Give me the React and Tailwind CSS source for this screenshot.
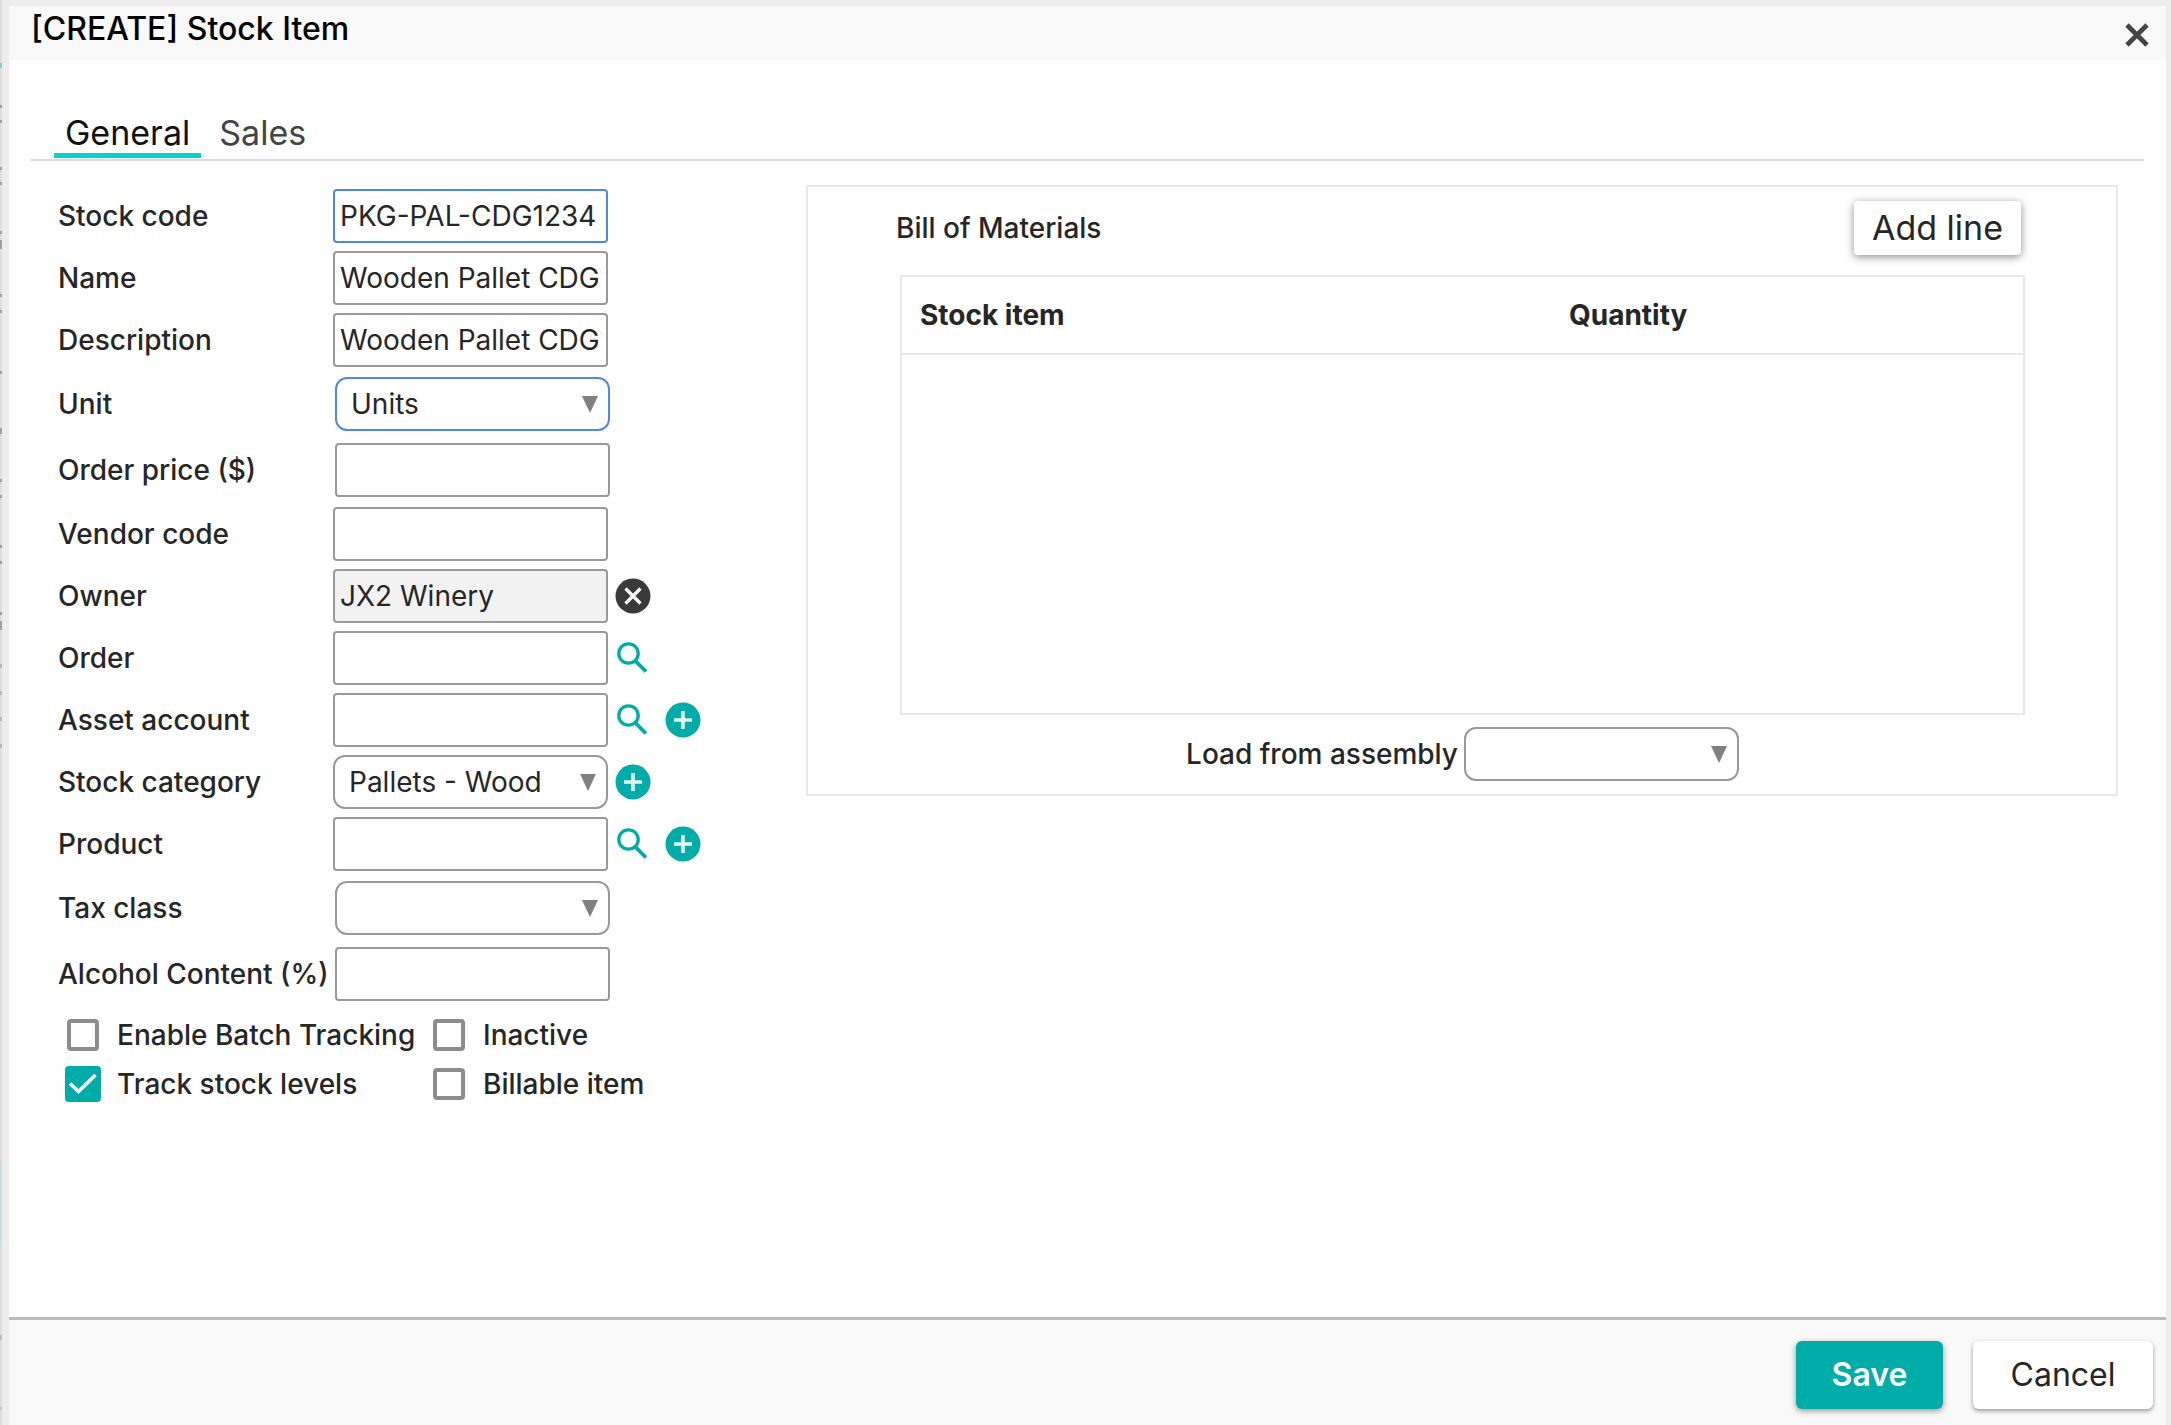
import React from 'react'

const FIELDS = [
  { id: 'stock-code', label: 'Stock code', value: 'PKG-PAL-CDG1234', active: true },
  { id: 'name', label: 'Name', value: 'Wooden Pallet CDG1234' },
  { id: 'description', label: 'Description', value: 'Wooden Pallet CDG1234' },
  { id: 'unit', label: 'Unit', type: 'select', value: 'Units', active: true, inset: true },
  { id: 'order-price', label: 'Order price ($)', value: '', inset: true },
  { id: 'vendor-code', label: 'Vendor code', value: '' },
  { id: 'owner', label: 'Owner', value: 'JX2 Winery', readOnly: true, actions: ['clear'] },
  { id: 'order', label: 'Order', value: '', actions: ['search'] },
  { id: 'asset-account', label: 'Asset account', value: '', actions: ['search', 'add'] },
  { id: 'stock-category', label: 'Stock category', type: 'select', value: 'Pallets - Wood', actions: ['add'] },
  { id: 'product', label: 'Product', value: '', actions: ['search', 'add'] },
  { id: 'tax-class', label: 'Tax class', type: 'select', value: '', inset: true },
  { id: 'alcohol', label: 'Alcohol Content (%)', value: '', inset: true },
]

const OPTIONS = [
  { id: 'batch', label: 'Enable Batch Tracking' },
  { id: 'inactive', label: 'Inactive' },
  { id: 'track', label: 'Track stock levels', checked: true },
  { id: 'billable', label: 'Billable item' },
]

// Sliver of the page behind the dialog
const EDGE = [
  'mt-[63px] h-[5px] bg-[#80d0cd]',
  'mt-[37px] h-[3px] bg-[#a0a0a0]',
  'mt-[12px] h-[3px] bg-[#a0a0a0]',
  'mt-[44px] h-[3px] bg-[#a0a0a0]',
  'mt-[12px] h-[3px] bg-[#a0a0a0]',
  'mt-[46px] h-[3px] bg-[#a0a0a0]',
  'mt-[6px] h-[9px] bg-[#a0a0a0]',
  'mt-[45px] h-[3px] bg-[#a0a0a0]',
  'mt-[13px] h-[3px] bg-[#a0a0a0]',
  'mt-[58px] h-[3px] bg-[#a0a0a0]',
  'mt-[54px] h-[6px] bg-[#a0a0a0]',
  'mt-[45px] h-[3px] bg-[#a0a0a0]',
  'mt-[13px] h-[3px] bg-[#a0a0a0]',
  'mt-[47px] h-[3px] bg-[#a0a0a0]',
  'mt-[13px] h-[3px] bg-[#a0a0a0]',
  'mt-[48px] h-[3px] bg-[#a0a0a0]',
  'mt-[6px] h-[9px] bg-[#a0a0a0]',
  'mt-[34px] h-[4px] bg-[#b8b8b8]',
  'mt-[23px] h-[4px] bg-[#b8b8b8]',
  'mt-[22px] h-[4px] bg-[#b8b8b8]',
  'mt-[23px] h-[4px] bg-[#b8b8b8]',
  'mt-auto h-[88px] bg-[#c8e0de]',
  'mt-[88px] h-[5px] bg-[#bdbdbd]',
  'mt-[67px] mb-[15px] h-[3px] bg-[#c4c4c4]',
]

function SearchIcon() {
  return (
    <svg viewBox="0 0 36 36" className="size-9" fill="none" stroke="#00aca8">
      <circle cx="13.500" cy="13.500" r="9.700" strokeWidth="3.300" />
      <path d="M20.500 21 L31 31.500" strokeWidth="3.800" />
    </svg>
  )
}

function AddIcon() {
  return (
    <svg viewBox="0 0 36 36" className="size-9">
      <circle cx="18" cy="18" r="17.500" fill="#00aca8" />
      <path d="M18 9V27M9 18H27" stroke="#e6f7f6" strokeWidth="3.600" />
    </svg>
  )
}

function ClearIcon() {
  return (
    <svg viewBox="0 0 36 36" className="size-9">
      <circle cx="18" cy="18" r="17.500" fill="#3a3a3a" />
      <path d="M10.500 10.500L25.500 25.500M25.500 10.500L10.500 25.500" stroke="#fff" strokeWidth="3.200" />
    </svg>
  )
}

const ICONS = { search: SearchIcon, add: AddIcon, clear: ClearIcon }

function Select({ id, value, active }) {
  return (
    <span className="grid w-[275px] items-center">
      <select
        id={id}
        defaultValue={value}
        className={`col-start-1 row-start-1 h-[54px] w-full appearance-none rounded-xl border-2 bg-white pl-3.5 outline-none ${active ? 'border-[#5286df]' : 'border-[#999]'}`}
      >
        <option>{value}</option>
      </select>
      <svg viewBox="0 0 16 17" className="pointer-events-none col-start-1 row-start-1 mr-3 h-[17px] w-4 justify-self-end" fill="#808080">
        <path d="M0 0H16L8 17Z" />
      </svg>
    </span>
  )
}

function Field({ id, label, value, type, active, inset, readOnly, actions = [] }) {
  return (
    <div className={`flex items-center ${inset ? 'py-1.5' : 'py-1'}`}>
      <label htmlFor={id} className={`shrink-0 whitespace-nowrap font-medium ${inset ? 'w-[277px]' : 'w-[275px]'}`}>
        {label}
      </label>
      {type === 'select' ? (
        <Select id={id} value={value} active={active} />
      ) : (
        <input
          id={id}
          type="text"
          defaultValue={value}
          readOnly={readOnly}
          className={`h-[54px] w-[275px] rounded-sm border-2 px-[5px] outline-none ${active ? 'border-[#5286df]' : 'border-[#999]'} ${readOnly ? 'bg-[#f2f2f2]' : 'bg-white'}`}
        />
      )}
      {actions.length > 0 && (
        <div className="ml-[7px] flex gap-3.5">
          {actions.map((action) => {
            const Icon = ICONS[action]
            return (
              <button key={action} type="button" aria-label={`${action} ${label}`}>
                <Icon />
              </button>
            )
          })}
        </div>
      )}
    </div>
  )
}

function Option({ id, label, checked }) {
  return (
    <label htmlFor={id} className="flex h-[49px] items-center gap-4 whitespace-nowrap font-medium">
      <span className="grid size-9 place-items-center">
        <input
          id={id}
          type="checkbox"
          defaultChecked={checked}
          className="peer col-start-1 row-start-1 size-8 appearance-none rounded-sm border-4 border-[#8c8c8c] bg-white checked:size-9 checked:border-0 checked:bg-[#00aca8]"
        />
        <svg viewBox="0 0 36 36" className="pointer-events-none invisible col-start-1 row-start-1 size-9 peer-checked:visible" fill="none" stroke="#fff" strokeWidth="3.600">
          <path d="M5 17.500L13.500 25.500L30.500 9" />
        </svg>
      </span>
      {label}
    </label>
  )
}

function BillOfMaterials() {
  return (
    <section className="flex-1 self-start border-2 border-[#e8e8e8] pr-[91px] pl-[92px]">
      <div className="flex h-[88px] items-center justify-between pr-1 pb-1.5">
        <h2 className="-ml-1 font-medium">Bill of Materials</h2>
        <button type="button" className="h-[54px] rounded-sm bg-white px-[18px] text-[34px] shadow-[0_2px_8px_rgba(0,0,0,0.45)]">
          Add line
        </button>
      </div>
      <div className="h-[440px] border-2 border-[#e8e8e8]">
        <table className="w-full table-fixed">
          <thead>
            <tr className="h-[77px] border-b-2 border-[#e8e8e8] text-left">
              <th className="w-[59.5%] pl-[18px] font-bold">Stock item</th>
              <th className="font-bold">Quantity</th>
            </tr>
          </thead>
          <tbody />
        </table>
      </div>
      <div className="flex items-center justify-center gap-1.5 pt-3 pb-[13px]">
        <label htmlFor="assembly" className="font-medium">Load from assembly</label>
        <Select id="assembly" value="" />
      </div>
    </section>
  )
}

export default function App() {
  return (
    <div className="flex min-h-screen bg-[#ededed] pr-[5px] font-[Inter,'Liberation_Sans',sans-serif] text-[28px] leading-8 text-[#262626]">
      <div className="mr-[7px] flex w-0.5 flex-col bg-[#dedede]">
        {EDGE.map((mark, i) => (
          <div key={i} className={mark} />
        ))}
      </div>
      <div role="dialog" aria-labelledby="title" className="mt-1.5 flex min-w-0 flex-1 flex-col bg-white">
        <header className="flex h-[54px] items-center justify-between bg-[#f9f9f9] pr-[17px] pl-[22px]">
          <h1 id="title" className="pb-2 text-[32px] font-medium text-black">[CREATE] Stock Item</h1>
          <button type="button" aria-label="Close" className="pt-1">
            <svg viewBox="0 0 24 24" className="size-6" fill="none" stroke="#444" strokeWidth="4.600">
              <path d="M2 2L22 22M22 2L2 22" />
            </svg>
          </button>
        </header>

        <main className="flex-1 px-[22px] pt-[53px]">
          <nav className="flex border-b-2 border-[#dcdcdc] px-[23px] pb-px text-[34px] leading-10">
            <a href="#general" className="border-b-[5px] border-[#00d4d0] px-[11px] text-[#111]">General</a>
            <a href="#sales" className="px-[18px] text-[#444]">Sales</a>
          </nav>
          <form className="flex pt-6 pr-[26px] pl-[27px]">
            <div className="w-[748px] shrink-0">
              {FIELDS.map((field) => (
                <Field key={field.id} {...field} />
              ))}
              <div className="grid grid-cols-[366px_auto] pt-[3px] pl-[7px]">
                {OPTIONS.map((option) => (
                  <Option key={option.id} {...option} />
                ))}
              </div>
            </div>
            <BillOfMaterials />
          </form>
        </main>

        <footer className="flex h-[108px] items-start justify-end gap-[30px] border-t-[3px] border-[#bababa] bg-[#f9f9f9] pt-[21px] pr-[13px] text-[32px]">
          <button type="button" className="h-[68px] w-[147px] rounded-md bg-[#00aca8] font-semibold text-white shadow-[0_2px_6px_rgba(0,0,0,0.4)]">Save</button>
          <button type="button" className="h-[68px] w-[180px] rounded-md bg-white shadow-[0_2px_4px_rgba(0,0,0,0.4)]">Cancel</button>
        </footer>
      </div>
    </div>
  )
}
